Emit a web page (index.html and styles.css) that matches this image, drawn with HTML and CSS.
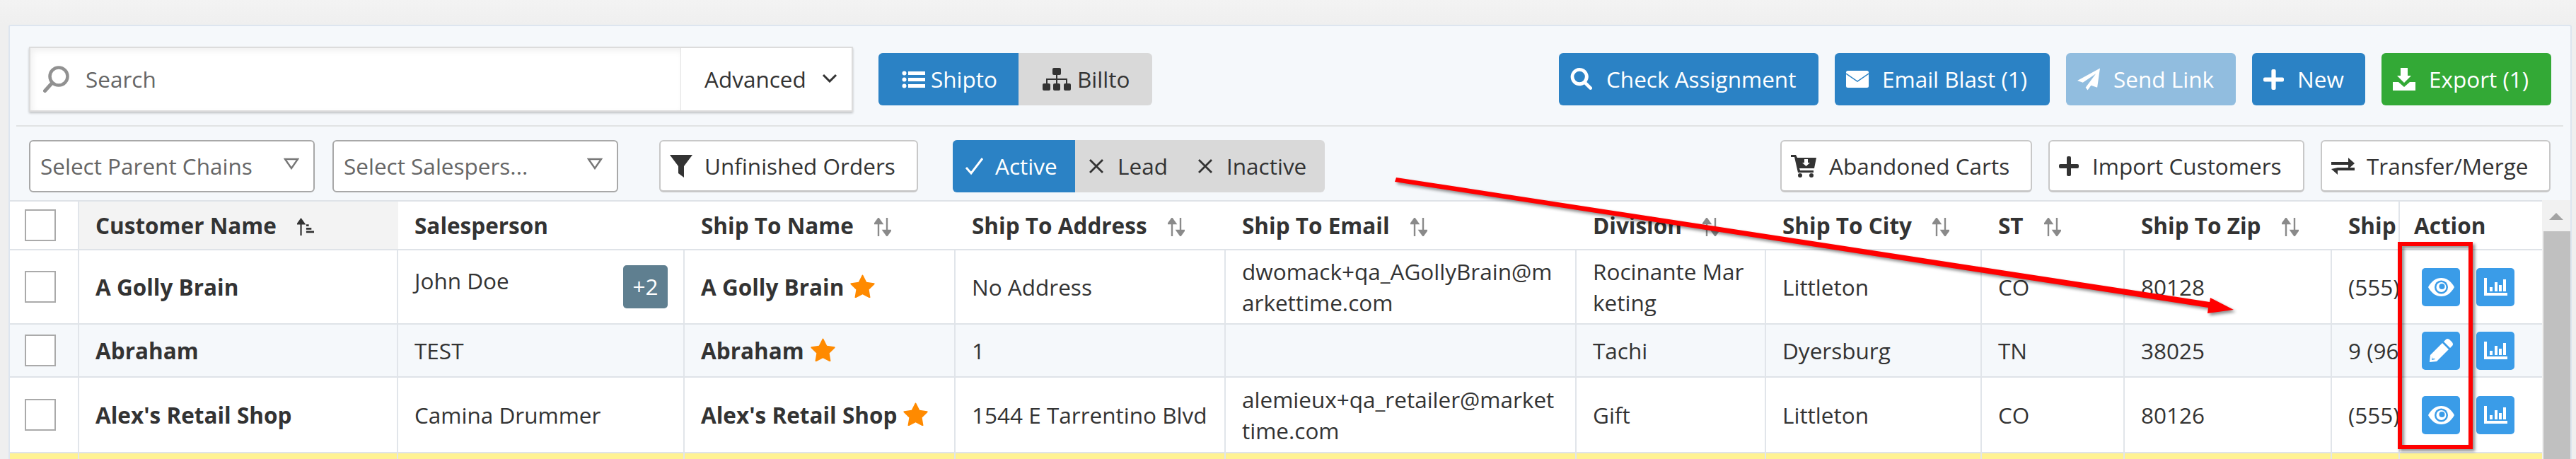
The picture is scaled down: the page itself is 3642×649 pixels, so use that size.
FILE: index.html
```html
<!DOCTYPE html>
<html lang="en">
<head>
<meta charset="utf-8">
<title>Customers</title>
<link rel="stylesheet" href="styles.css">
</head>
<body>
<svg class="defs" aria-hidden="true">
  <symbol id="i-star" viewBox="0 90 1664 1600"><path d="M1664 735q0 22-26 48l-363 354 86 500q1 7 1 20 0 21-10.5 35.5t-30.5 14.5q-19 0-40-12l-449-236-449 236q-22 12-40 12-21 0-31.5-14.5t-10.5-35.5q0-6 2-20l86-500-364-354q-25-27-25-48 0-37 56-46l502-73 225-455q19-41 49-41t49 41l225 455 502 73q56 9 56 46z"/></symbol>
  <symbol id="i-sort" viewBox="0 0 24 26"><path d="M6 26V6M1 8l5-7 5 7zM18 0v20M13 18l5 7 5-7z" fill="#8a8a8a" stroke="#8a8a8a" stroke-width="2.4"/></symbol>
  <symbol id="i-chart" viewBox="0 0 33 25"><path fill="#fff" d="M0 0h4v21h29v4H0zM8 13h4v6H8zM15 6h4v13h-4zM21 10h4v9h-4zM27 2h4v17h-4z"/></symbol>
  <symbol id="i-eye" viewBox="0 0 37 26"><path fill="#fff" d="M0 13C5 4 11 0 18.500 0S32 4 37 13c-5 9-11 13-18.500 13S5 22 0 13z"/><circle cx="18.500" cy="13" r="9.500" fill="#3a9ce8"/><circle cx="18.500" cy="13" r="7" fill="#fff"/><circle cx="19.500" cy="12" r="4" fill="#3a9ce8"/></symbol>
  <symbol id="i-pencil" viewBox="0 0 33 33"><path fill="#fff" d="M23 1q2-2 5 0l4 4q2 3 0 5l-3 3-9-9zM18 6l9 9-17 17-10 1 1-10zM4 25l-1 5 5-1-1-1-3 0z"/></symbol>
  <symbol id="i-plus" viewBox="0 0 28 28"><path d="M11 2q0-2 2-2h2q2 0 2 2v9h9q2 0 2 2v2q0 2-2 2h-9v9q0 2-2 2h-2q-2 0-2-2v-9H2q-2 0-2-2v-2q0-2 2-2h9z"/></symbol>
</svg>

<main class="panel">
  <div class="bar bar-top">
    <div class="search">
      <div class="search-field">
        <svg class="ic-search-o" viewBox="0 0 37 38"><circle cx="22" cy="15" r="12.500" fill="none" stroke="#919191" stroke-width="4.500"/><path d="M12 25L2.500 35.500" stroke="#919191" stroke-width="5" stroke-linecap="round"/></svg>
        <span class="search-label">Search</span>
      </div>
      <div class="search-adv">
        <span>Advanced</span>
        <svg class="ic-chev" viewBox="0 0 22 13"><path d="M2 2l9 9 9-9" fill="none" stroke="#333" stroke-width="3"/></svg>
      </div>
    </div>

    <div class="seg seg-view">
      <div class="seg-item on shipto">
        <svg class="ic-list" viewBox="0 0 33 25" fill="#fff"><circle cx="3.500" cy="3.500" r="3"/><circle cx="3.500" cy="12.500" r="3"/><circle cx="3.500" cy="21.500" r="3"/><path d="M9 1h24v5H9zM9 10h24v5H9zM9 19h24v5H9z"/></svg>
        <span>Shipto</span>
      </div>
      <div class="seg-item billto">
        <svg class="ic-site" viewBox="0 0 40 32" fill="#333"><rect x="14" width="12" height="10" rx="2"/><rect y="22" width="11" height="10" rx="2"/><rect x="15" y="22" width="10" height="10" rx="2"/><rect x="30" y="22" width="10" height="10" rx="2"/><path d="M19 10h2v5h14v7h-2v-5H21v5h-2v-5H7v5H5v-7h14z"/></svg>
        <span>Billto</span>
      </div>
    </div>

    <div class="actions">
      <button class="btn blue b-check"><svg class="ic" viewBox="0 0 32 33"><path fill="#fff" d="M13 0a13 13 0 0 1 10.600 20.500l7.500 7.500q1 1.500 0 3l-.5.500q-1.500 1-3 0l-7.500-7.500A13 13 0 1 1 13 0zm0 5a8 8 0 1 0 0 16 8 8 0 0 0 0-16z"/></svg><span>Check Assignment</span></button>
      <button class="btn blue b-email"><svg class="ic ic-mail" viewBox="0 0 32 24"><rect width="32" height="24" rx="2.500" fill="#fff"/><path d="M0 4l16 11L32 4" fill="none" stroke="#2b82c5" stroke-width="1.500"/></svg><span>Email Blast (1)</span></button>
      <button class="btn faded b-send"><svg class="ic" viewBox="0 0 33 32"><path fill="#fff" d="M33 0l-4 28-9-3-5 7-3-4 15-20L8 21 0 18z"/></svg><span>Send Link</span></button>
      <button class="btn blue b-new"><svg class="ic ic-plus-w"><use href="#i-plus"/></svg><span>New</span></button>
      <button class="btn green b-export"><svg class="ic" viewBox="0 0 32 32"><path fill="#fff" d="M11 0h10v11h5l-10 10L6 11h5zM0 20h8l8 7 8-7h8v12H0z"/></svg><span>Export (1)</span></button>
    </div>
  </div>

  <div class="bar bar-filter">
    <div class="sel"><span>Select Parent Chains</span><svg class="ic-tri" viewBox="0 0 22 17"><path d="M2 2h18l-9 13z" fill="none" stroke="#777" stroke-width="2.400"/></svg></div>
    <div class="sel sel-2"><span>Select Salespers...</span><svg class="ic-tri" viewBox="0 0 22 17"><path d="M2 2h18l-9 13z" fill="none" stroke="#777" stroke-width="2.400"/></svg></div>
    <button class="out b-unf"><svg class="ic" viewBox="0 0 32 32"><path fill="#333" d="M0 0h32L20 16v16l-8-6V16z"/></svg><span>Unfinished Orders</span></button>

    <div class="seg seg-status">
      <div class="seg-item on st-active"><svg class="ic-check" viewBox="0 0 27 26"><path d="M2 15l7 8L25 2" fill="none" stroke="#fff" stroke-width="3"/></svg><span>Active</span></div>
      <div class="seg-item st-lead"><svg class="ic-x" viewBox="0 0 20 20"><path d="M1 1l18 18M19 1L1 19" stroke="#333" stroke-width="2.800"/></svg><span>Lead</span></div>
      <div class="seg-item st-inactive"><svg class="ic-x" viewBox="0 0 20 20"><path d="M1 1l18 18M19 1L1 19" stroke="#333" stroke-width="2.800"/></svg><span>Inactive</span></div>
    </div>

    <div class="actions">
      <button class="out b-carts"><svg class="ic ic-cart" viewBox="0 0 36 32"><path fill="#333" d="M0 0h7l2 4h27l-3 15H12l1 3h19v3H10L5 3H0z"/><circle cx="13" cy="29" r="3" fill="#333"/><circle cx="29" cy="29" r="3" fill="#333"/><path fill="#fff" d="M19 6h5v5h3l-5.500 5L16 11h3z"/></svg><span>Abandoned Carts</span></button>
      <button class="out b-import"><svg class="ic ic-plus-d"><use href="#i-plus"/></svg><span>Import Customers</span></button>
      <button class="out b-transfer"><svg class="ic ic-swap" viewBox="0 0 33 24"><path fill="#333" d="M0 6h24V0l9 8-9 8v-6H0zM33 14v4H9v6l-9-8 9-2z"/></svg><span>Transfer/Merge</span></button>
    </div>
  </div>

  <div class="grid-wrap">
    <table class="grid">
      <colgroup>
        <col class="c-ck"><col class="c-cust"><col class="c-sales"><col class="c-name"><col class="c-addr"><col class="c-mail"><col class="c-div"><col class="c-city"><col class="c-st"><col class="c-zip"><col class="c-ship"><col class="c-act">
      </colgroup>
      <thead>
        <tr>
          <th class="ck ruled"><span class="box"></span></th>
          <th class="sorted">Customer Name<svg class="sort" viewBox="0 0 26 26"><path d="M6 26V6M1 8l5-7 5 7z" fill="#333" stroke="#333" stroke-width="2.400"/><path d="M14 9h4v3h-4zM14 14h8v3h-8zM14 19h12v3H14z" fill="#333"/></svg></th>
          <th>Salesperson</th>
          <th>Ship To Name<svg class="sort"><use href="#i-sort"/></svg></th>
          <th>Ship To Address<svg class="sort"><use href="#i-sort"/></svg></th>
          <th>Ship To Email<svg class="sort"><use href="#i-sort"/></svg></th>
          <th>Division<svg class="sort"><use href="#i-sort"/></svg></th>
          <th>Ship To City<svg class="sort"><use href="#i-sort"/></svg></th>
          <th>ST<svg class="sort"><use href="#i-sort"/></svg></th>
          <th>Ship To Zip<svg class="sort"><use href="#i-sort"/></svg></th>
          <th class="ruled">Ship To Phone</th>
          <th class="act-h">Action</th>
        </tr>
      </thead>
      <tbody>
        <tr class="r1">
          <td class="ck"><span class="box"></span></td>
          <td class="b">A Golly Brain</td>
          <td><div class="sales"><span class="sales-name">John Doe</span><span class="badge">+2</span></div></td>
          <td class="b">A Golly Brain<svg class="star"><use href="#i-star"/></svg></td>
          <td>No Address</td>
          <td class="brk">dwomack+qa_AGollyBrain@markettime.com</td>
          <td class="brk">Rocinante Marketing</td>
          <td>Littleton</td>
          <td>CO</td>
          <td>80128</td>
          <td class="nw">(555) 555-5555</td>
          <td class="act"><div class="act-row"><span class="ib"><svg class="i-eye"><use href="#i-eye"/></svg></span><span class="ib"><svg class="i-chart"><use href="#i-chart"/></svg></span></div></td>
        </tr>
        <tr class="r2">
          <td class="ck"><span class="box"></span></td>
          <td class="b">Abraham</td>
          <td>TEST</td>
          <td class="b">Abraham<svg class="star"><use href="#i-star"/></svg></td>
          <td>1</td>
          <td></td>
          <td>Tachi</td>
          <td>Dyersburg</td>
          <td>TN</td>
          <td>38025</td>
          <td class="nw">9 (965) 555-5555</td>
          <td class="act"><div class="act-row"><span class="ib"><svg class="i-pencil"><use href="#i-pencil"/></svg></span><span class="ib"><svg class="i-chart"><use href="#i-chart"/></svg></span></div></td>
        </tr>
        <tr class="r3">
          <td class="ck"><span class="box"></span></td>
          <td class="b">Alex's Retail Shop</td>
          <td>Camina Drummer</td>
          <td class="b">Alex's Retail Shop<svg class="star"><use href="#i-star"/></svg></td>
          <td>1544 E Tarrentino Blvd</td>
          <td class="brk">alemieux+qa_retailer@markettime.com</td>
          <td>Gift</td>
          <td>Littleton</td>
          <td>CO</td>
          <td>80126</td>
          <td class="nw">(555) 555-5555</td>
          <td class="act"><div class="act-row"><span class="ib"><svg class="i-eye"><use href="#i-eye"/></svg></span><span class="ib"><svg class="i-chart"><use href="#i-chart"/></svg></span></div></td>
        </tr>
        <tr class="r4">
          <td></td><td></td><td></td><td></td><td></td><td></td><td></td><td></td><td></td><td></td><td></td><td></td>
        </tr>
      </tbody>
    </table>
    <div class="scrollbar"><div class="scroll-up"><span class="scroll-arrow"></span></div><div class="scroll-thumb"></div></div>
  </div>
</main>

<svg class="notes" viewBox="0 0 3642 649" aria-hidden="true">
  <g class="note-shadow">
    <path fill="#f00" d="M1974 251L3124 427 3125 421 3158 438 3121 443 3122 435 1972 257z"/>
    <path fill="none" stroke="#f00" stroke-width="6" d="M3393 345h100v287h-100z"/>
  </g>
</svg>
</body>
</html>
```
FILE: styles.css
```css
* { box-sizing: border-box; }

html, body {
  margin: 0;
  height: 649px;
  overflow: hidden;
}

body {
  position: relative;
  padding: 35px 6px 0 12px;
  background: linear-gradient(#f3f3f3, #efefef 35px);
  font-family: "Open Sans", "Noto Sans", sans-serif;
  font-size: 31.5px;
  line-height: 44px;
  color: #333;
}

.defs { position: absolute; width: 0; height: 0; }

.panel {
  height: 614px;
  background: #f5f8fb;
  border: 2px solid #dde5ef;
  border-bottom: 0;
  border-radius: 3px 3px 0 0;
}

.bar { display: flex; align-items: center; }

.bar-top {
  margin: 0 10px 0 9px;
  padding: 29px 17px 19px 18px;
  border-bottom: 2px solid #e1e3e4;
  height: 142px;
}

.bar-filter {
  padding: 19px 28px 12px 27px;
  height: 105px;
}

.actions { display: flex; margin-left: auto; gap: 23px; }

/* search */
.search {
  display: flex;
  width: 1165px;
  height: 92px;
  background: #fff;
  border: 2px solid #dcdcdc;
  box-shadow: 0 2px 3px rgba(0, 0, 0, .22);
}

.search-field {
  flex: 1;
  display: flex;
  align-items: center;
  padding-left: 18px;
  box-shadow: inset 3px 4px 10px rgba(0, 0, 0, .06);
  color: #666;
}

.ic-search-o { width: 37px; height: 38px; margin-right: 23px; }

.search-adv {
  display: flex;
  align-items: center;
  width: 242px;
  padding-left: 33px;
  border-left: 1px solid #e3e3e3;
}

.ic-chev { width: 22px; height: 13px; margin: -4px 0 0 22px; }

/* segmented */
.seg {
  display: flex;
  overflow: hidden;
  height: 74px;
  background: #d9d9d9;
  border-radius: 6px;
}

.seg-item { display: flex; align-items: center; }
.seg-item.on { background: #2b82c5; color: #fff; }

.seg-view { margin-left: 36px; width: 387px; }
.shipto { width: 198px; padding-left: 33px; }
.billto { padding-left: 34px; }
.ic-list { width: 33px; height: 25px; margin-right: 8px; }
.ic-site { width: 40px; height: 32px; margin-right: 9px; }

.seg-status { margin-left: 49px; width: 526px; }
.st-active { width: 173px; padding-left: 17px; }
.ic-check { width: 27px; height: 26px; margin-right: 16px; }
.st-lead { width: 154px; padding-left: 20px; }
.st-inactive { padding-left: 20px; }
.ic-x { width: 20px; height: 20px; margin-right: 20px; }

/* buttons */
.btn, .out {
  display: flex;
  align-items: center;
  height: 74px;
  margin: 0;
  padding: 0 0 0 16px;
  font: inherit;
  border-radius: 6px;
}

.btn { border: 0; color: #fff; }
.blue { background: #2b82c5; }
.faded { background: #91bddf; }
.green { background: #33a936; }

.out {
  background: #fff;
  color: #333;
  border: 2px solid #c8c8c8;
  border-bottom-width: 3px;
  padding-left: 13px;
}

.ic { width: 32px; height: 32px; margin-right: 19px; flex: none; }
.ic-mail { height: 24px; }
.ic-plus-w { width: 29px; height: 29px; fill: #fff; }
.ic-plus-d { width: 28px; height: 28px; fill: #333; }
.ic-cart { width: 36px; margin-right: 18px; }
.ic-swap { width: 33px; height: 24px; margin-right: 17px; }

.b-check { width: 367px; }
.b-email { width: 304px; }
.b-send { width: 240px; }
.b-new { width: 160px; }
.b-export { width: 240px; }
.b-unf { width: 366px; margin-left: 58px; }
.b-unf .ic { margin-right: 17px; }
.b-carts { width: 356px; }
.b-import { width: 362px; }
.b-transfer { width: 325px; }

/* selects */
.sel {
  display: flex;
  align-items: center;
  justify-content: space-between;
  width: 404px;
  height: 74px;
  padding: 0 20px 0 14px;
  background: #fff;
  border: 2px solid #a8a8a8;
  border-radius: 6px;
  color: #666;
}

.sel-2 { margin-left: 25px; }
.ic-tri { width: 22px; height: 17px; margin-top: -8px; }

/* table */
.grid-wrap {
  display: flex;
  align-items: flex-start;
  margin-top: -1px;
  height: 366px;
}

.grid {
  width: 3580px;
  table-layout: fixed;
  border-collapse: separate;
  border-spacing: 0;
  border-top: 2px solid #dfe3e8;
  background: #fff;
}

.c-ck { width: 98px; }
.c-cust { width: 451px; }
.c-sales { width: 405px; }
.c-name { width: 383px; }
.c-addr { width: 382px; }
.c-mail { width: 496px; }
.c-div { width: 268px; }
.c-city { width: 305px; }
.c-st { width: 202px; }
.c-zip { width: 293px; }
.c-ship { width: 96px; }
.c-act { width: 201px; }

.grid th, .grid td {
  padding: 0 22px 0 23px;
  border-bottom: 2px solid #dfe3e8;
  overflow: hidden;
  text-align: left;
  white-space: nowrap;
}

.grid th { height: 69px; font-weight: 700; }
.grid td { border-right: 2px solid #e1e5ea; }
.grid td:last-child { border-right: 0; }
.grid .ruled { border-right: 2px solid #e1e5ea; }

.grid .ck { padding: 0 0 0 21px; }
.grid .sorted { background: #f3f3f3; }
.grid .b { font-weight: 700; }
.grid .brk { white-space: normal; word-break: break-all; }
.grid .act-h { padding-left: 20px; }
.grid .act { padding: 0 0 0 31px; }

.r1 td { height: 105px; }
.r2 td { height: 75px; background: #f5f8fb; }
.r3 td { height: 107px; }
.r4 td { height: 60px; background: #fff292; }

.box {
  display: block;
  width: 44px;
  height: 45px;
  background: #fff;
  border: 2px solid #aaa;
}

.sort { width: 24px; height: 26px; margin-left: 29px; vertical-align: -3px; }

.star { width: 35px; height: 33px; margin-left: 9px; fill: #ff8a00; vertical-align: -3px; }

.sales { display: flex; align-items: center; justify-content: space-between; }
.sales-name { padding-bottom: 18px; }

.badge {
  display: flex;
  align-items: center;
  justify-content: center;
  width: 63px;
  height: 61px;
  margin-top: -1px;
  background: #5f7f90;
  border-radius: 5px;
  color: #fff;
}

.act-row { display: flex; gap: 23px; }

.ib {
  display: flex;
  align-items: center;
  justify-content: center;
  width: 54px;
  height: 54px;
  background: #3a9ce8;
  border-radius: 5px;
}

.i-eye { width: 37px; height: 26px; }
.i-chart { width: 33px; height: 25px; }
.i-pencil { width: 33px; height: 33px; }

/* scrollbar */
.scrollbar { flex: none; width: 40px; height: 366px; background: #f1f1f1; }
.scroll-up { display: flex; justify-content: center; padding-top: 18px; height: 44px; }
.scroll-arrow {
  width: 0;
  height: 0;
  border: 10px solid transparent;
  border-top: 0;
  border-bottom-color: #a3a3a3;
}
.scroll-thumb { height: 322px; margin-left: 2px; background: #c0c0c0; }

/* annotations drawn over the screenshot */
.notes {
  position: absolute;
  left: 0;
  top: 0;
  width: 3642px;
  height: 649px;
  pointer-events: none;
}

.note-shadow { filter: drop-shadow(3px 3px 2px rgba(0, 0, 0, .45)); }
```
